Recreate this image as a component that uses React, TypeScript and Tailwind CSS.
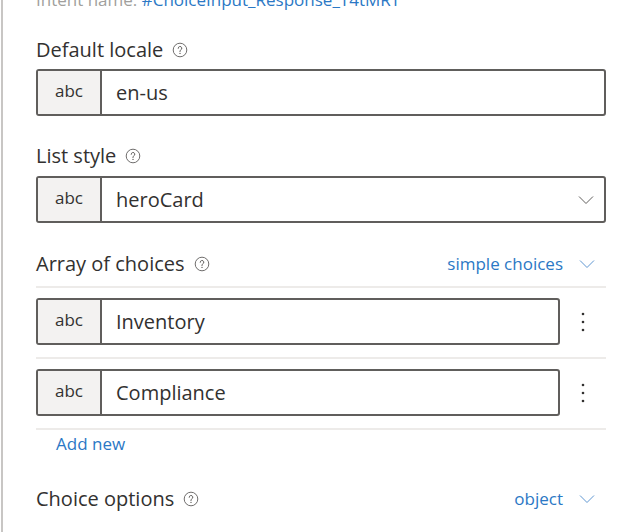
import React from "react";

const font = "font-['Segoe_UI','Open_Sans','Noto_Sans',sans-serif]";

const Help = () => (
  <svg width="16" height="16" viewBox="0 0 16 16" fill="none" className="ml-[9px] shrink-0">
    <circle cx="8" cy="8" r="6.8" stroke="#605e5c" strokeWidth="0.9" />
    <path
      d="M6.2 6.3a1.8 1.8 0 1 1 2.6 1.6c-.5.3-.8.6-.8 1.2v.5"
      stroke="#605e5c"
      strokeWidth="1"
      strokeLinecap="round"
    />
    <circle cx="8" cy="11.4" r=".7" fill="#605e5c" />
  </svg>
);

const Chevron = ({ color }: { color: string }) => (
  <svg width="16" height="10" viewBox="0 0 16 10" fill="none" className="shrink-0">
    <path d="M1 1.5l7 7 7-7" stroke={color} strokeWidth="1" />
  </svg>
);

const Dots = () => (
  <svg width="4" height="20" viewBox="0 0 4 20" className="shrink-0">
    <circle cx="2" cy="2" r="1.3" fill="#323130" />
    <circle cx="2" cy="10" r="1.3" fill="#323130" />
    <circle cx="2" cy="18" r="1.3" fill="#323130" />
  </svg>
);

const Label = ({ text, right }: { text: string; right?: string }) => (
  <div className="h-[28px] flex items-center text-[20px] text-[#323130]">
    <span className="leading-none">{text}</span>
    <Help />
    {right && (
      <div className="ml-auto mr-[11px] flex items-center gap-[16px] text-[#2b78c5] text-[17px]">
        <span>{right}</span>
        <Chevron color="#5f97d2" />
      </div>
    )}
  </div>
);

const Field = ({ value, dropdown }: { value: string; dropdown?: boolean }) => (
  <div className="h-[47px] flex border-2 border-[#605e5c] rounded-[3px] overflow-hidden bg-white">
    <div className="w-[64px] shrink-0 bg-[#f3f2f1] border-r-2 border-[#605e5c] flex items-center justify-center text-[17px] text-[#323130] pb-[3px]">
      abc
    </div>
    <div className="flex-1 flex items-center pl-[14px] text-[20px] text-[#323130]">{value}</div>
    {dropdown && (
      <div className="flex items-center pr-[10px]">
        <Chevron color="#605e5c" />
      </div>
    )}
  </div>
);

const Item = ({ value }: { value: string }) => (
  <div className="border-t-2 border-[#edebe9] pt-[10px] pb-[12px] flex">
    <div className="flex-1">
      <Field value={value} />
    </div>
    <div className="w-[46px] shrink-0 flex items-center justify-center">
      <Dots />
    </div>
  </div>
);

export default function App() {
  return (
    <div className={`w-[627px] h-[532px] overflow-hidden bg-white flex ${font}`}>
      <div className="w-[1px] shrink-0" />
      <div className="w-[2px] shrink-0 bg-[#c8c6c4]" />
      <div className="flex-1 pl-[33px] pr-[21px] flex flex-col">
        <div className="-mt-[9px] h-[15px] text-[17px] leading-[18px] whitespace-nowrap">
          <span className="text-[#a19f9d]">Intent name: </span>
          <span className="text-[#2b78c5]">#ChoiceInput_Response_T4tMRT</span>
        </div>

        <div className="mt-[30px]">
          <Label text="Default locale" />
        </div>
        <div className="mt-[5px]">
          <Field value="en-us" />
        </div>

        <div className="mt-[26px]">
          <Label text="List style" />
        </div>
        <div className="mt-[6px]">
          <Field value="heroCard" dropdown />
        </div>

        <div className="mt-[27px]">
          <Label text="Array of choices" right="simple choices" />
        </div>
        <div className="mt-[8px]">
          <Item value="Inventory" />
          <Item value="Compliance" />
          <div className="border-t-2 border-[#edebe9] h-[30px] flex items-center pl-[20px] text-[17px] text-[#2b78c5]">
            Add new
          </div>
        </div>

        <div className="mt-[27px]">
          <Label text="Choice options" right="object" />
        </div>
      </div>
    </div>
  );
}
